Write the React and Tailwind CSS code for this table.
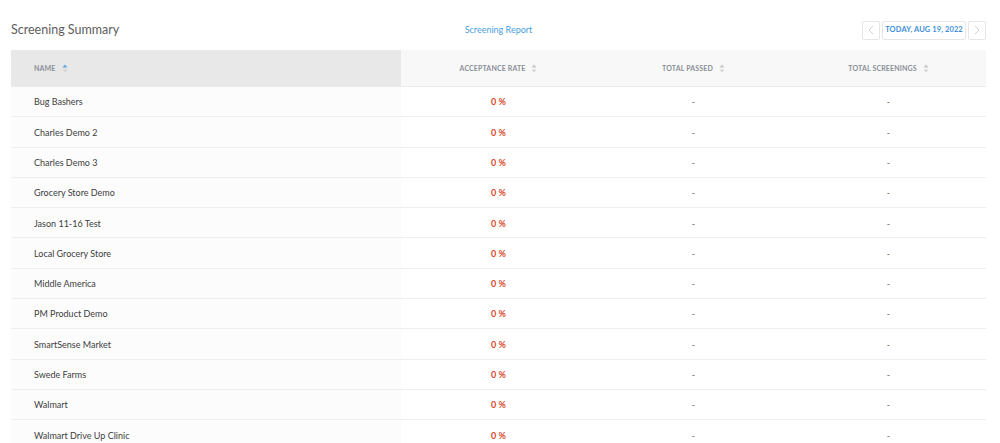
import React from "react";

const rows = [
  "Bug Bashers",
  "Charles Demo 2",
  "Charles Demo 3",
  "Grocery Store Demo",
  "Jason 11-16 Test",
  "Local Grocery Store",
  "Middle America",
  "PM Product Demo",
  "SmartSense Market",
  "Swede Farms",
  "Walmart",
  "Walmart Drive Up Clinic",
];

function SortIcon({ active }) {
  return (
    <svg width="6" height="9" viewBox="0 0 6 9" className="ml-[6px] inline-block">
      <path d="M3 0.5 L5.5 3.5 H0.5 Z" fill={active ? "#5aa7e6" : "#c8c8c8"} />
      <path d="M3 8.5 L5.5 5.5 H0.5 Z" fill="#d4d4d4" />
    </svg>
  );
}

export default function App() {
  return (
    <div className="w-[1000px] h-[443px] overflow-hidden bg-white" style={{ fontFamily: "Lato, 'Open Sans', sans-serif" }}>
      <div className="flex items-center h-[50px] pt-[10px] pl-[11px] pr-[14px]">
        <div className="w-[390px] text-[12.5px] font-normal text-[#5e5e5e]">Screening Summary</div>
        <div className="w-[195px] text-center text-[9px] text-[#4a9fe0]">Screening Report</div>
        <div className="flex-1 flex justify-end gap-[2px]">
          <div className="w-[18px] h-[19px] border border-[#e6e6e6] rounded-[2px] flex items-center justify-center">
            <svg width="6" height="10" viewBox="0 0 6 10"><path d="M5 1 L1 5 L5 9" stroke="#cfcfcf" strokeWidth="1" fill="none" /></svg>
          </div>
          <div className="w-[84px] h-[19px] border border-[#e6e6e6] rounded-[2px] flex items-center justify-center text-[7.5px] font-bold text-[#3d8fd9] tracking-[0.1px]">
            TODAY, AUG 19, 2022
          </div>
          <div className="w-[18px] h-[19px] border border-[#e6e6e6] rounded-[2px] flex items-center justify-center">
            <svg width="6" height="10" viewBox="0 0 6 10"><path d="M1 1 L5 5 L1 9" stroke="#cfcfcf" strokeWidth="1" fill="none" /></svg>
          </div>
        </div>
      </div>
      <div className="ml-[11px] w-[975px]">
        <div className="flex h-[37px] border-b border-[#ececec] text-[7px] font-bold text-[#8a8f98] tracking-[0.15px]">
          <div className="w-[390px] bg-[#e8e8e8] flex items-center pl-[23px]">NAME<SortIcon active /></div>
          <div className="w-[195px] bg-[#f8f8f8] flex items-center justify-center">ACCEPTANCE RATE<SortIcon /></div>
          <div className="w-[195px] bg-[#f8f8f8] flex items-center justify-center">TOTAL PASSED<SortIcon /></div>
          <div className="w-[195px] bg-[#f8f8f8] flex items-center justify-center">TOTAL SCREENINGS<SortIcon /></div>
        </div>
        {rows.map((r) => (
          <div key={r} className="flex h-[30.3px] border-b border-[#efefef] text-[9px] text-[#3c3c3c]">
            <div className="w-[390px] bg-[#fcfcfc] flex items-center pl-[23px] pt-[1px]">{r}</div>
            <div className="w-[195px] flex items-center justify-center pt-[1px] font-bold text-[#d9482b]">0 %</div>
            <div className="w-[195px] flex items-center justify-center pt-[1px] text-[#666]">-</div>
            <div className="w-[195px] flex items-center justify-center pt-[1px] text-[#666]">-</div>
          </div>
        ))}
      </div>
    </div>
  );
}
